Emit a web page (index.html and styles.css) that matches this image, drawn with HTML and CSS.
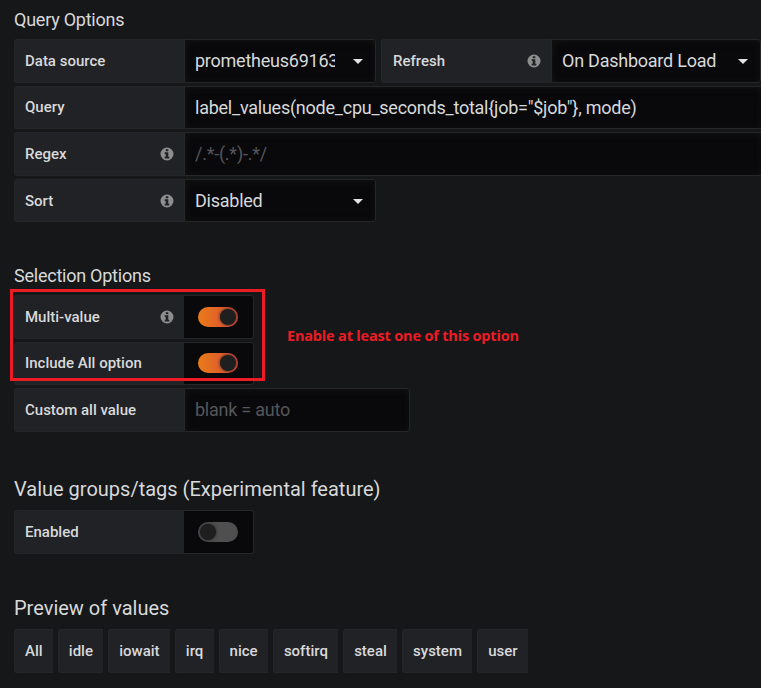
FILE: index.html
```html
<!DOCTYPE html>
<html lang="en">
<head>
<meta charset="utf-8">
<title>Variable options</title>
<link rel="stylesheet" href="styles.css">
</head>
<body>
<svg class="defs" aria-hidden="true">
  <symbol id="info" viewBox="0 0 14 14"><path fill-rule="evenodd" d="M7 .5a6.5 6.5 0 1 0 0 13a6.5 6.5 0 1 0 0-13zM5.800 2.200h2.500v2H5.800zM4.700 5.300h3.600v4.500h1v1.600H4.700V9.800h1V6.900h-1z"/></symbol>
</svg>
<main class="editor">
  <section class="group query">
    <h5 class="heading">Query Options</h5>
    <div class="row">
      <div class="label">Data source</div>
      <div class="field select narrow"><span class="value clip">prometheus69163</span><i class="caret"></i></div>
      <div class="label second">Refresh<svg class="info"><use href="#info"/></svg></div>
      <div class="field select refresh"><span class="value">On Dashboard Load</span><i class="caret"></i></div>
    </div>
    <div class="row">
      <div class="label">Query</div>
      <div class="field wide"><span class="value">label_values(node_cpu_seconds_total{job="$job"}, mode)</span></div>
    </div>
    <div class="row">
      <div class="label">Regex<svg class="info"><use href="#info"/></svg></div>
      <div class="field wide"><span class="value hint">/.*-(.*)-.*/</span></div>
    </div>
    <div class="row">
      <div class="label">Sort<svg class="info"><use href="#info"/></svg></div>
      <div class="field select narrow"><span class="value">Disabled</span><i class="caret"></i></div>
    </div>
  </section>

  <section class="group selection">
    <h5 class="heading">Selection Options</h5>
    <div class="row">
      <div class="label">Multi-value<svg class="info"><use href="#info"/></svg></div>
      <div class="switch"><span class="track on"><i class="knob"></i></span></div>
    </div>
    <div class="row">
      <div class="label">Include All option</div>
      <div class="switch"><span class="track on"><i class="knob"></i></span></div>
    </div>
    <div class="row">
      <div class="label">Custom all value</div>
      <div class="field custom"><span class="value hint">blank = auto</span></div>
    </div>
    <div class="frame"></div>
    <div class="note">Enable at least one of this option</div>
  </section>

  <section class="group tags">
    <h5 class="heading large">Value groups/tags (Experimental feature)</h5>
    <div class="row">
      <div class="label">Enabled</div>
      <div class="switch"><span class="track"><i class="knob"></i></span></div>
    </div>
  </section>

  <section class="group">
    <h5 class="heading large">Preview of values</h5>
    <div class="values">
      <span class="chip">All</span><span class="chip">idle</span><span class="chip">iowait</span><span class="chip">irq</span><span class="chip">nice</span><span class="chip">softirq</span><span class="chip">steal</span><span class="chip">system</span><span class="chip">user</span>
    </div>
  </section>
</main>
</body>
</html>
```
FILE: styles.css
```css
* { box-sizing: border-box; }
body {
  margin: 0;
  height: 688px;
  overflow: hidden;
  background: #161719;
  color: #d8d9da;
  font-family: Roboto, "Liberation Sans", sans-serif;
}
.defs { display: none; }
.editor { padding: 8px 0 0 14px; }
.group { position: relative; }
.query { height: 256px; }
.selection { height: 213px; }
.tags { height: 119px; }
.heading {
  margin: 0 0 7px;
  height: 24px;
  line-height: 24px;
  font-size: 18px;
  font-weight: 400;
  letter-spacing: -0.24px;
  white-space: nowrap;
}
.large { height: 26px; font-size: 20px; letter-spacing: 0; }
.row { display: flex; height: 43.600px; margin-bottom: 3px; }
.label {
  display: flex;
  align-items: center;
  justify-content: space-between;
  flex: none;
  width: 170px;
  padding: 0 10px;
  background: #212226;
  border: 1px solid #262628;
  border-right: 0;
  border-radius: 3px 0 0 3px;
  font-size: 15px;
  font-weight: 500;
  white-space: nowrap;
}
.second { margin-left: 5px; padding-left: 11px; }
.info { width: 14px; height: 14px; fill: #8e8e8e; }
.field {
  display: flex;
  align-items: center;
  flex: none;
  height: 43.500px;
  padding: 0 12px 0 10px;
  background: #09090b;
  border: 1px solid #262628;
  border-radius: 0 3px 3px 0;
  box-shadow: inset 1px 1px 7px #141414;
  font-size: 18px;
  letter-spacing: -0.24px;
  white-space: nowrap;
}
.select { justify-content: space-between; }
.narrow { width: 192px; }
.refresh { width: 210px; }
.wide { flex: 1; border-right: 0; border-radius: 0; }
.custom { width: 226px; }
.clip { width: 140px; overflow: hidden; }
.hint { color: #55565a; }
.caret {
  width: 0;
  height: 0;
  margin-top: 2px;
  border: 5px solid transparent;
  border-top-color: #e3e3e3;
  border-bottom: 0;
}
.switch {
  display: flex;
  align-items: center;
  width: 70px;
  padding-left: 14px;
  background: #09090b;
  border: 1px solid #262628;
  border-left: 0;
  border-radius: 0 3px 3px 0;
}
.track {
  display: flex;
  align-items: center;
  width: 40px;
  height: 20px;
  padding: 0 2px;
  border-radius: 10px;
  background: #4f4f50;
}
.on {
  justify-content: flex-end;
  background: linear-gradient(90deg, #eb7b18, #d44a3a);
}
.knob {
  width: 16px;
  height: 16px;
  border-radius: 50%;
  background: #1f1f20;
  box-shadow: 0 0 3px #1f1f20;
}
.frame {
  position: absolute;
  left: -4px;
  top: 25px;
  width: 255px;
  height: 92px;
  border: 3px solid #ed1c24;
}
.note {
  position: absolute;
  left: 273px;
  top: 62px;
  color: #ed1c24;
  font: 700 14.500px/20px "Open Sans", sans-serif;
  letter-spacing: -0.18px;
  white-space: nowrap;
}
.values { display: flex; gap: 5px; }
.chip {
  height: 44px;
  padding: 0 10.250px 0 10px;
  background: #212226;
  border: 1px solid #262628;
  border-right: 0;
  border-radius: 3px 0 0 3px;
  font-size: 15px;
  font-weight: 500;
  line-height: 42px;
}
```
